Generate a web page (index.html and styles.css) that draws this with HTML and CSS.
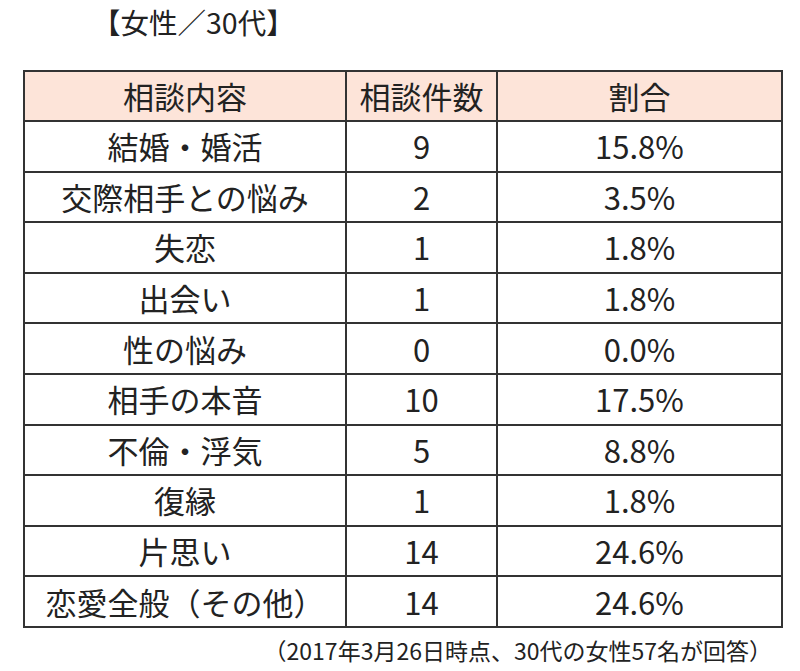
FILE: index.html
```html
<!DOCTYPE html>
<html lang="ja">
<head>
<meta charset="utf-8">
<link rel="stylesheet" href="styles.css">
</head>
<body>
<div class="page">
  <h1 class="title">【女性／30代】</h1>
  <table class="stats">
    <colgroup>
      <col class="c1"><col class="c2"><col class="c3">
    </colgroup>
    <thead>
      <tr><th>相談内容</th><th>相談件数</th><th>割合</th></tr>
    </thead>
    <tbody>
      <tr><td>結婚・婚活</td><td>9</td><td>15.8%</td></tr>
      <tr><td>交際相手との悩み</td><td>2</td><td>3.5%</td></tr>
      <tr><td>失恋</td><td>1</td><td>1.8%</td></tr>
      <tr><td>出会い</td><td>1</td><td>1.8%</td></tr>
      <tr><td>性の悩み</td><td>0</td><td>0.0%</td></tr>
      <tr><td>相手の本音</td><td>10</td><td>17.5%</td></tr>
      <tr><td>不倫・浮気</td><td>5</td><td>8.8%</td></tr>
      <tr><td>復縁</td><td>1</td><td>1.8%</td></tr>
      <tr><td>片思い</td><td>14</td><td>24.6%</td></tr>
      <tr><td>恋愛全般（その他）</td><td>14</td><td>24.6%</td></tr>
    </tbody>
  </table>
  <p class="note">（2017年3月26日時点、30代の女性57名が回答）</p>
</div>
</body>
</html>
```

FILE: styles.css
```css
html, body {
  margin: 0;
  padding: 0;
  background: #ffffff;
}
body {
  font-family: "Noto Sans CJK JP", "Noto Sans", sans-serif;
  color: #222222;
}
.page {
  width: 800px;
  height: 671px;
  overflow: hidden;
}
.title {
  margin: 0;
  padding: 3px 0 0 92px;
  height: 70px;
  box-sizing: border-box;
  font-size: 28.5px;
  font-weight: normal;
  line-height: 38px;
  color: #222222;
}
.stats {
  margin-left: 23px;
  width: 758px;
  border-collapse: collapse;
  table-layout: fixed;
  border: 2px solid #333333;
}
.c1 { width: 322px; }
.c2 { width: 151px; }
.c3 { width: 285px; }
.stats th,
.stats td {
  border: 2px solid #333333;
  padding: 0;
  text-align: center;
  vertical-align: middle;
  font-size: 31px;
  font-weight: normal;
  line-height: 36px;
  color: #222222;
}
.stats thead tr {
  height: 50px;
}
.stats th {
  background: #fde4d9;
}
.stats tbody tr {
  height: 50.6px;
}
.note {
  margin: 7px 0 0 0;
  padding-right: 28px;
  text-align: right;
  font-size: 23px;
  line-height: 30px;
  color: #222222;
}
```
